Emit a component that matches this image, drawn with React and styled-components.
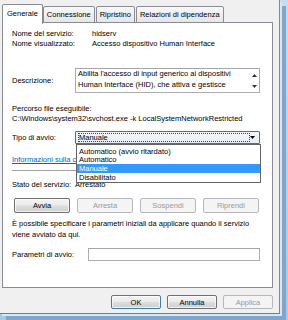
import React from 'react';
import styled, { createGlobalStyle } from 'styled-components';

const GlobalStyle = createGlobalStyle`
  html, body {
    margin: 0;
    padding: 0;
  }
  body {
    width: 288px;
    height: 320px;
    overflow: hidden;
    font-family: "Liberation Sans", Arial, sans-serif;
    font-size: 7.5px;
    color: #000;
  }
`;

const Frame = styled.div`
  width: 288px;
  height: 320px;
  background: linear-gradient(180deg, #c6dcf1 0%, #a9c8e6 100%);
  position: relative;
`;

const Window = styled.div`
  width: 279px;
  height: 313px;
  background: #f0f0f0;
  border-right: 1px solid #7d8b99;
  border-bottom: 1px solid #6f7f90;
  box-shadow: 2px 2px 0 #d8e7f5, 6px 6px 0 #7fa6cd;
  box-sizing: content-box;
  display: flex;
  flex-direction: column;
`;

const TabBar = styled.div`
  display: flex;
  align-items: flex-end;
  height: 20px;
  margin-top: 3px;
  padding-left: 2px;
  position: relative;
  z-index: 2;
`;

const Tab = styled.div`
  box-sizing: border-box;
  height: ${p => (p.$active ? '20px' : '17px')};
  margin-bottom: ${p => (p.$active ? '-1px' : '0')};
  padding: 0 ${p => (p.$active ? '4px' : '3px')};
  margin-right: ${p => (p.$active ? '0' : '1px')};
  display: flex;
  align-items: center;
  border: 1px solid #898c95;
  border-bottom: ${p => (p.$active ? 'none' : '1px solid #898c95')};
  border-radius: 2px 2px 0 0;
  background: ${p => (p.$active ? '#fff' : 'linear-gradient(180deg, #f8f8f8 0%, #e6e6e6 100%)')};
  white-space: nowrap;
  padding-bottom: ${p => (p.$active ? '3px' : '0')};
`;

const Panel = styled.div`
  box-sizing: border-box;
  margin-left: 2px;
  width: 271px;
  height: 266px;
  margin-top: -1px;
  border: 1px solid #898c95;
  background: #fff;
  padding: 5px 12px 0 9px;
  display: flex;
  flex-direction: column;
  position: relative;
  overflow: hidden;
`;

const Row = styled.div`
  display: flex;
  align-items: ${p => p.$align || 'center'};
  height: ${p => p.$h || 10}px;
  margin-top: ${p => p.$mt || 0}px;
  white-space: nowrap;
  position: relative;
`;

const Label = styled.div`
  width: ${p => p.$w}px;
  flex: none;
`;

const TextBox = styled.div`
  box-sizing: border-box;
  width: ${p => p.$w}px;
  height: ${p => p.$h}px;
  border: 1px solid #abadb3;
  border-top-color: #a3a6ad;
  background: #fff;
  display: flex;
  position: relative;
`;

const DescText = styled.div`
  flex: 1;
  padding: 0 2px;
  line-height: 10.5px;
  white-space: normal;
  overflow: hidden;
`;

const ScrollCol = styled.div`
  width: 10px;
  display: flex;
  flex-direction: column;
  justify-content: space-between;
  align-items: center;
  padding: 5px 0 4px;
`;

const Arrow = styled.svg`
  width: 5px;
  height: 3px;
  display: block;
`;

const Combo = styled.div`
  box-sizing: border-box;
  width: 185px;
  height: 13px;
  border: 1px solid #5e6b78;
  border-radius: 1px;
  background: linear-gradient(180deg, #f4f7fb 0%, #e6edf5 100%);
  display: flex;
  align-items: center;
  padding: 0 4px 0 2px;
  position: relative;
`;

const ComboValue = styled.span`
  flex: 1;
  padding: 0 1px;
  outline: 1px dotted #444;
  outline-offset: -1px;
  line-height: 9px;
`;

const DropList = styled.div`
  position: absolute;
  left: 0;
  top: 12px;
  width: 185px;
  box-sizing: border-box;
  border: 1px solid #646464;
  background: #fff;
  padding-top: 2px;
  z-index: 5;
`;

const DropItem = styled.div`
  height: ${p => p.$h}px;
  line-height: ${p => p.$h}px;
  padding-left: 2px;
  background: ${p => (p.$selected ? '#3399ff' : 'transparent')};
  color: ${p => (p.$selected ? '#fff' : '#000')};
`;

const Link = styled.span`
  color: #0066cc;
  text-decoration: underline;
`;

const Separator = styled.div`
  height: 1px;
  background: #a0a0a0;
  margin-top: 6px;
  width: 248px;
`;

const ButtonRow = styled.div`
  display: flex;
  gap: ${p => p.$gap}px;
  margin-top: ${p => p.$mt || 0}px;
  margin-left: ${p => p.$ml || 0}px;
`;

const Button = styled.div`
  box-sizing: border-box;
  width: ${p => p.$w}px;
  height: ${p => p.$h || 15}px;
  display: flex;
  align-items: center;
  justify-content: center;
  border-radius: 2px;
  border: 1px solid ${p => (p.$disabled ? '#b5b9bd' : p.$default ? '#3c7fb1' : '#707070')};
  color: ${p => (p.$disabled ? '#9a9a9a' : '#000')};
  background: ${p =>
    p.$disabled
      ? '#f4f4f4'
      : 'linear-gradient(180deg, #f3f3f3 0%, #ebebeb 48%, #dddddd 52%, #cfcfcf 100%)'};
  box-shadow: ${p => (p.$disabled ? 'none' : 'inset 0 0 0 1px rgba(255,255,255,0.7)')};
`;

const InfoText = styled.div`
  margin-top: 5px;
  line-height: 11px;
  white-space: nowrap;
`;

const Footer = styled.div`
  display: flex;
  justify-content: flex-end;
  padding: 7px 6px 0 0;
`;

const arrowUp = (
  <Arrow viewBox="0 0 5 3"><path d="M2.5 0L5 3H0z" fill="#333" /></Arrow>
);
const arrowDown = (
  <Arrow viewBox="0 0 5 3"><path d="M0 0h5L2.5 3z" fill="#333" /></Arrow>
);

export default function App() {
  return (
    <>
      <GlobalStyle />
      <Frame>
        <Window>
          <TabBar>
            <Tab $active>Generale</Tab>
            <Tab>Connessione</Tab>
            <Tab>Ripristino</Tab>
            <Tab>Relazioni di dipendenza</Tab>
          </TabBar>
          <Panel>
            <Row>
              <Label $w={80}>Nome del servizio:</Label>
              <span>hidserv</span>
            </Row>
            <Row>
              <Label $w={80}>Nome visualizzato:</Label>
              <span>Accesso dispositivo Human Interface</span>
            </Row>
            <Row $h={25} $mt={20}>
              <Label $w={63}>Descrizione:</Label>
              <TextBox $w={185} $h={25}>
                <DescText>
                  Abilita l'accesso di input generico ai dispositivi Human Interface (HID), che attiva e gestisce
                </DescText>
                <ScrollCol>
                  {arrowUp}
                  {arrowDown}
                </ScrollCol>
              </TextBox>
            </Row>
            <Row $mt={10}>Percorso file eseguibile:</Row>
            <Row>C:\Windows\system32\svchost.exe -k LocalSystemNetworkRestricted</Row>
            <Row $h={13} $mt={8} style={{ zIndex: 5 }}>
              <Label $w={63}>Tipo di avvio:</Label>
              <Combo>
                <ComboValue>Manuale</ComboValue>
                <Arrow viewBox="0 0 5 3"><path d="M0 0h5L2.5 3z" fill="#000" /></Arrow>
                <DropList>
                  <DropItem $h={9}>Automatico (avvio ritardato)</DropItem>
                  <DropItem $h={8}>Automatico</DropItem>
                  <DropItem $h={9} $selected>Manuale</DropItem>
                  <DropItem $h={9}>Disabilitato</DropItem>
                </DropList>
              </Combo>
            </Row>
            <Row $mt={10}>
              <Link>Informazioni sulla configurazione delle opzioni di avvio</Link>
            </Row>
            <Separator />
            <Row $mt={8}>
              <Label $w={63}>Stato del servizio:</Label>
              <span>Arrestato</span>
            </Row>
            <ButtonRow $gap={7} $mt={9} $ml={2}>
              <Button $w={56}>Avvia</Button>
              <Button $w={56} $disabled>Arresta</Button>
              <Button $w={56} $disabled>Sospendi</Button>
              <Button $w={56} $disabled>Riprendi</Button>
            </ButtonRow>
            <InfoText>
              È possibile specificare i parametri iniziali da applicare quando il servizio
              <br />
              viene avviato da qui.
            </InfoText>
            <Row $h={13} $mt={8}>
              <Label $w={76}>Parametri di avvio:</Label>
              <TextBox $w={172} $h={13} />
            </Row>
          </Panel>
          <Footer>
            <ButtonRow $gap={6}>
              <Button $w={50} $h={14} $default>OK</Button>
              <Button $w={50} $h={14}>Annulla</Button>
              <Button $w={50} $h={14} $disabled>Applica</Button>
            </ButtonRow>
          </Footer>
        </Window>
      </Frame>
    </>
  );
}
